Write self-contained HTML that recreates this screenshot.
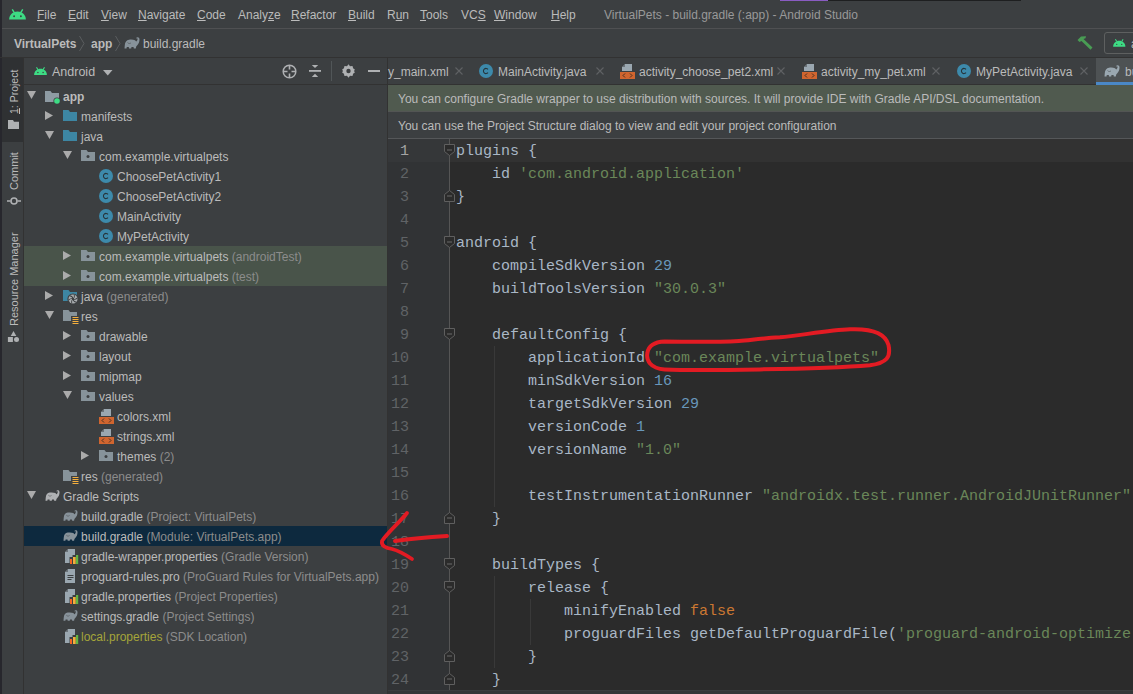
<!DOCTYPE html><html><head><meta charset="utf-8"><style>
*{margin:0;padding:0;box-sizing:border-box}
html,body{width:1133px;height:694px;overflow:hidden;background:#3C3F41}
body{position:relative;font-family:"Liberation Sans",sans-serif;font-size:12px;color:#BBBBBB}
.a{position:absolute}
.t{position:absolute;white-space:pre;line-height:20px;height:20px}
.u{text-decoration:underline;text-underline-offset:1px}
.code{position:absolute;font-family:"Liberation Mono",monospace;font-size:15px;line-height:23px;white-space:pre;color:#A9B7C6}
.ln{position:absolute;font-family:"Liberation Mono",monospace;font-size:15px;line-height:23px;color:#606366;text-align:right;width:40px}
.s{color:#6A8759}.n{color:#6897BB}.k{color:#CC7832}
.g{color:#8C8C8C}
svg{position:absolute;overflow:visible}
</style></head><body>
<div class="a" style="left:0;top:0;width:2px;height:694px;background:#27272d"></div>
<div class="a" style="left:780px;top:0;width:48px;height:1px;background:#8A5CC2"></div>
<div class="a" style="left:828px;top:0;width:193px;height:1px;background:#1E1F20"></div>
<div class="t" style="left:37px;top:5px;color:#BBBBBB"><span class="u">F</span>ile</div>
<div class="t" style="left:68px;top:5px;color:#BBBBBB"><span class="u">E</span>dit</div>
<div class="t" style="left:101px;top:5px;color:#BBBBBB"><span class="u">V</span>iew</div>
<div class="t" style="left:138px;top:5px;color:#BBBBBB"><span class="u">N</span>avigate</div>
<div class="t" style="left:197px;top:5px;color:#BBBBBB"><span class="u">C</span>ode</div>
<div class="t" style="left:238px;top:5px;color:#BBBBBB">Analy<span class="u">z</span>e</div>
<div class="t" style="left:291px;top:5px;color:#BBBBBB"><span class="u">R</span>efactor</div>
<div class="t" style="left:348px;top:5px;color:#BBBBBB"><span class="u">B</span>uild</div>
<div class="t" style="left:387px;top:5px;color:#BBBBBB">R<span class="u">u</span>n</div>
<div class="t" style="left:420px;top:5px;color:#BBBBBB"><span class="u">T</span>ools</div>
<div class="t" style="left:461px;top:5px;color:#BBBBBB">VC<span class="u">S</span></div>
<div class="t" style="left:494px;top:5px;color:#BBBBBB"><span class="u">W</span>indow</div>
<div class="t" style="left:551px;top:5px;color:#BBBBBB"><span class="u">H</span>elp</div>
<div class="t" style="left:604px;top:5px;color:#999999">VirtualPets - build.gradle (:app) - Android Studio</div>
<svg style="left:8.5px;top:8.5px" width="17" height="10.62" viewBox="0 0 24 15"><path d="M0.2 14.8 C0.2 8 5.5 3.4 12 3.4 C18.5 3.4 23.8 8 23.8 14.8 Z" fill="#3DDC84"/><path d="M4.6 0.6 L7.2 4.8 M19.4 0.6 L16.8 4.8" stroke="#3DDC84" stroke-width="2"/><circle cx="7.2" cy="10.2" r="1.3" fill="#3C3F41"/><circle cx="16.8" cy="10.2" r="1.3" fill="#3C3F41"/></svg>
<div class="a" style="left:2px;top:28px;width:1131px;height:1px;background:#4F5052"></div>
<div class="t" style="left:14px;top:34px;font-weight:bold;color:#BBBBBB">VirtualPets</div>
<svg style="left:79px;top:36px" width="6" height="15"><path d="M0.5 0 L5 7.5 L0.5 15" fill="none" stroke="#5A5D5F" stroke-width="1"/></svg>
<div class="t" style="left:91px;top:34px;font-weight:bold;color:#BBBBBB">app</div>
<svg style="left:115px;top:36px" width="6" height="15"><path d="M0.5 0 L5 7.5 L0.5 15" fill="none" stroke="#5A5D5F" stroke-width="1"/></svg>
<svg style="left:124px;top:37px" width="16" height="12.00" viewBox="0 0 16 12"><path d="M0.5 11.5 L0.8 8 C1 5 2.5 3 5 2.7 C7 2.4 9.5 2.5 11 3.2 L12.2 4.5 C13 4 13.5 3 13.6 2 C13.5 1 12.8 1 12.5 1.5 L12 1.2 C12.5 0.2 14 -0.1 15 0.8 C15.8 1.8 15.6 4 14.8 6 C14 7.5 13 8.5 12.2 9.5 L11.8 11.5 L9.8 11.5 L9.5 10 L7.5 10 L7.2 11.5 L5 11.5 L4.8 10 L2.8 10 L2.5 11.5 Z" fill="#87929A"/><path d="M3.5 5.5 C4.5 6.8 6 6.8 7 5.8" stroke="#3C3F41" stroke-width="0.7" fill="none" opacity="0.7"/></svg>
<div class="t" style="left:143px;top:34px;color:#BBBBBB">build.gradle</div>
<svg style="left:1077px;top:36px" width="16" height="14" viewBox="0 0 16 14"><path d="M0.5 4 L4 0.5 L9 0.2 L8.5 2.2 L6.5 3 L15.5 11.5 L13.5 13.8 L4.5 5 L2.5 6 Z" fill="#499C54"/></svg>
<div class="a" style="left:1104px;top:32px;width:40px;height:22px;border:1px solid #5E6060;border-radius:3px"></div>
<svg style="left:1112.5px;top:39px" width="12.5" height="7.81" viewBox="0 0 24 15"><path d="M0.2 14.8 C0.2 8 5.5 3.4 12 3.4 C18.5 3.4 23.8 8 23.8 14.8 Z" fill="#3DDC84"/><path d="M4.6 0.6 L7.2 4.8 M19.4 0.6 L16.8 4.8" stroke="#3DDC84" stroke-width="2"/><circle cx="7.2" cy="10.2" r="1.3" fill="#3C3F41"/><circle cx="16.8" cy="10.2" r="1.3" fill="#3C3F41"/></svg>
<div class="t" style="left:1131px;top:34px">app</div>
<div class="a" style="left:0;top:57px;width:1133px;height:1px;background:#323232"></div>
<div class="a" style="left:2px;top:58px;width:21px;height:636px;background:#3C3F41"></div>
<div class="a" style="left:2px;top:58px;width:21px;height:84px;background:#2F3133"></div>
<div class="a" style="left:23px;top:58px;width:1px;height:636px;background:#323232"></div>
<div class="t" style="left:3.8px;top:113.5px;font-size:10.5px;transform-origin:0 0;transform:rotate(-90deg);color:#BBBBBB"><span class="u">1</span>: Project</div>
<svg style="left:8px;top:120px" width="11" height="9" viewBox="0 0 11 9"><path d="M0 0 L5 0 L6 1.8 L11 1.8 L11 9 L0 9 Z" fill="#AFB1B3"/></svg>
<div class="t" style="left:3.8px;top:190px;font-size:11px;transform-origin:0 0;transform:rotate(-90deg);color:#BBBBBB">Commit</div>
<svg style="left:7px;top:196px" width="14" height="10" viewBox="0 0 14 10"><circle cx="7" cy="5" r="3" fill="none" stroke="#AFB1B3" stroke-width="1.6"/><path d="M0 5 H3.5 M10.5 5 H14" stroke="#AFB1B3" stroke-width="1.6"/></svg>
<div class="t" style="left:3.8px;top:326px;font-size:11px;transform-origin:0 0;transform:rotate(-90deg);color:#BBBBBB">Resource Manager</div>
<svg style="left:7px;top:331px" width="13" height="12" viewBox="0 0 13 12"><path d="M6.5 0 L9.3 5 L3.7 5 Z" fill="#AFB1B3"/><rect x="0.9" y="6" width="5" height="5" fill="#AFB1B3"/><circle cx="9.5" cy="8.5" r="2.5" fill="#AFB1B3"/></svg>
<svg style="left:33.5px;top:66.5px" width="13" height="8.12" viewBox="0 0 24 15"><path d="M0.2 14.8 C0.2 8 5.5 3.4 12 3.4 C18.5 3.4 23.8 8 23.8 14.8 Z" fill="#3DDC84"/><path d="M4.6 0.6 L7.2 4.8 M19.4 0.6 L16.8 4.8" stroke="#3DDC84" stroke-width="2"/><circle cx="7.2" cy="10.2" r="1.3" fill="#3C3F41"/><circle cx="16.8" cy="10.2" r="1.3" fill="#3C3F41"/></svg>
<div class="t" style="left:52px;top:62px;font-size:12.5px;color:#BBBBBB">Android</div>
<svg style="left:103px;top:70px" width="10" height="6"><path d="M0 0 H9.5 L4.75 5.5 Z" fill="#AFB1B3"/></svg>
<svg style="left:281.5px;top:63.5px" width="15" height="15" viewBox="0 0 15 15"><circle cx="7.5" cy="7.5" r="6.3" fill="none" stroke="#AFB1B3" stroke-width="1.5"/><path d="M7.5 1.5 V5.5 M7.5 9.5 V13.5 M1.5 7.5 H5.5 M9.5 7.5 H13.5" stroke="#AFB1B3" stroke-width="1.6"/></svg>
<svg style="left:309px;top:65px" width="12" height="12" viewBox="0 0 12 12"><rect x="0" y="5" width="12" height="1.8" fill="#AFB1B3"/><path d="M2.8 0 H9.2 L6 3 Z M2.8 12 H9.2 L6 8.8 Z" fill="#AFB1B3"/></svg>
<div class="a" style="left:331px;top:61px;width:1px;height:20px;background:#515658"></div>
<svg style="left:341.5px;top:64px" width="13" height="14" viewBox="0 0 13 14"><path d="M6.5 0.3 L8 2.2 L10.5 1.9 L11.1 4.2 L13 5.8 L11.9 7 L13 8.2 L11.1 9.8 L10.5 12.1 L8 11.8 L6.5 13.7 L5 11.8 L2.5 12.1 L1.9 9.8 L0 8.2 L1.1 7 L0 5.8 L1.9 4.2 L2.5 1.9 L5 2.2 Z" fill="#AFB1B3"/><circle cx="6.5" cy="7" r="2.2" fill="#3C3F41"/></svg>
<div class="a" style="left:368px;top:70px;width:12px;height:2px;background:#AFB1B3"></div>
<div class="a" style="left:24px;top:84px;width:363px;height:1px;background:#323232"></div>
<div class="a" style="left:24px;top:246px;width:363px;height:40px;background:#49544A"></div>
<div class="a" style="left:24px;top:526px;width:363px;height:20px;background:#0D293E"></div>
<svg style="left:27px;top:91px" width="9" height="8"><path d="M0 0 H9 L4.5 8 Z" fill="#ABABAB"/></svg>
<svg style="left:45px;top:91px" width="14" height="12" viewBox="0 0 14 12"><path d="M0 0 H5.5 L7 2 H14 V11 H0 Z" fill="#8E9BA3"/></svg>
<svg style="left:53px;top:97px" width="8" height="8"><circle cx="4" cy="4" r="3.6" fill="#3C3F41"/><circle cx="4" cy="4" r="2.8" fill="#3DDC84"/></svg>
<div class="t" style="left:63px;top:87px;font-weight:bold;color:#BBBBBB">app</div>
<svg style="left:45px;top:111px" width="8" height="9"><path d="M0 0 V9 L8 4.5 Z" fill="#ABABAB"/></svg>
<svg style="left:63px;top:110px" width="14" height="12" viewBox="0 0 14 12"><path d="M0 0 H5.5 L7 2 H14 V11 H0 Z" fill="#3D86A3"/></svg>
<div class="t" style="left:81px;top:107px;color:#BBBBBB">manifests</div>
<svg style="left:45px;top:131px" width="9" height="8"><path d="M0 0 H9 L4.5 8 Z" fill="#ABABAB"/></svg>
<svg style="left:63px;top:130px" width="14" height="12" viewBox="0 0 14 12"><path d="M0 0 H5.5 L7 2 H14 V11 H0 Z" fill="#3D86A3"/></svg>
<div class="t" style="left:81px;top:127px;color:#BBBBBB">java</div>
<svg style="left:63px;top:151px" width="9" height="8"><path d="M0 0 H9 L4.5 8 Z" fill="#ABABAB"/></svg>
<svg style="left:81px;top:150px" width="14" height="12" viewBox="0 0 14 12"><path d="M0 0 H5.5 L7 2 H14 V11 H0 Z" fill="#87939A"/><circle cx="7" cy="6.5" r="1.5" fill="#3C3F41"/></svg>
<div class="t" style="left:99px;top:147px;color:#BBBBBB">com.example.virtualpets</div>
<svg style="left:99px;top:169px" width="14" height="14" viewBox="0 0 14 14"><circle cx="7" cy="7" r="7" fill="#3D8AAB"/><path d="M9 5.3 A2.6 2.6 0 1 0 9 8.7" fill="none" stroke="#26343A" stroke-width="1.05"/></svg>
<div class="t" style="left:117px;top:167px;color:#BBBBBB">ChoosePetActivity1</div>
<svg style="left:99px;top:189px" width="14" height="14" viewBox="0 0 14 14"><circle cx="7" cy="7" r="7" fill="#3D8AAB"/><path d="M9 5.3 A2.6 2.6 0 1 0 9 8.7" fill="none" stroke="#26343A" stroke-width="1.05"/></svg>
<div class="t" style="left:117px;top:187px;color:#BBBBBB">ChoosePetActivity2</div>
<svg style="left:99px;top:209px" width="14" height="14" viewBox="0 0 14 14"><circle cx="7" cy="7" r="7" fill="#3D8AAB"/><path d="M9 5.3 A2.6 2.6 0 1 0 9 8.7" fill="none" stroke="#26343A" stroke-width="1.05"/></svg>
<div class="t" style="left:117px;top:207px;color:#BBBBBB">MainActivity</div>
<svg style="left:99px;top:229px" width="14" height="14" viewBox="0 0 14 14"><circle cx="7" cy="7" r="7" fill="#3D8AAB"/><path d="M9 5.3 A2.6 2.6 0 1 0 9 8.7" fill="none" stroke="#26343A" stroke-width="1.05"/></svg>
<div class="t" style="left:117px;top:227px;color:#BBBBBB">MyPetActivity</div>
<svg style="left:63px;top:251px" width="8" height="9"><path d="M0 0 V9 L8 4.5 Z" fill="#ABABAB"/></svg>
<svg style="left:81px;top:250px" width="14" height="12" viewBox="0 0 14 12"><path d="M0 0 H5.5 L7 2 H14 V11 H0 Z" fill="#87939A"/><circle cx="7" cy="6.5" r="1.5" fill="#3C3F41"/></svg>
<div class="t" style="left:99px;top:247px;color:#BBBBBB">com.example.virtualpets<span class="g"> (androidTest)</span></div>
<svg style="left:63px;top:271px" width="8" height="9"><path d="M0 0 V9 L8 4.5 Z" fill="#ABABAB"/></svg>
<svg style="left:81px;top:270px" width="14" height="12" viewBox="0 0 14 12"><path d="M0 0 H5.5 L7 2 H14 V11 H0 Z" fill="#87939A"/><circle cx="7" cy="6.5" r="1.5" fill="#3C3F41"/></svg>
<div class="t" style="left:99px;top:267px;color:#BBBBBB">com.example.virtualpets<span class="g"> (test)</span></div>
<svg style="left:45px;top:291px" width="8" height="9"><path d="M0 0 V9 L8 4.5 Z" fill="#ABABAB"/></svg>
<svg style="left:63px;top:290px" width="14" height="12" viewBox="0 0 14 12"><path d="M0 0 H5.5 L7 2 H14 V11 H0 Z" fill="#3D86A3"/></svg>
<svg style="left:68px;top:293.5px" width="10" height="10" viewBox="0 0 10 10"><circle cx="5" cy="5" r="5.6" fill="#3C3F41"/><circle cx="5" cy="5" r="4.5" fill="#A9ADB0"/><path d="M5 5 C6.2 4.2 6.8 2.5 6.2 0.6" transform="rotate(0 5 5)" stroke="#3C3F41" stroke-width="0.9" fill="none"/><path d="M5 5 C6.2 4.2 6.8 2.5 6.2 0.6" transform="rotate(60 5 5)" stroke="#3C3F41" stroke-width="0.9" fill="none"/><path d="M5 5 C6.2 4.2 6.8 2.5 6.2 0.6" transform="rotate(120 5 5)" stroke="#3C3F41" stroke-width="0.9" fill="none"/><path d="M5 5 C6.2 4.2 6.8 2.5 6.2 0.6" transform="rotate(180 5 5)" stroke="#3C3F41" stroke-width="0.9" fill="none"/><path d="M5 5 C6.2 4.2 6.8 2.5 6.2 0.6" transform="rotate(240 5 5)" stroke="#3C3F41" stroke-width="0.9" fill="none"/><path d="M5 5 C6.2 4.2 6.8 2.5 6.2 0.6" transform="rotate(300 5 5)" stroke="#3C3F41" stroke-width="0.9" fill="none"/><circle cx="5" cy="5" r="1.1" fill="#3C3F41"/></svg>
<div class="t" style="left:81px;top:287px;color:#BBBBBB">java<span class="g"> (generated)</span></div>
<svg style="left:45px;top:311px" width="9" height="8"><path d="M0 0 H9 L4.5 8 Z" fill="#ABABAB"/></svg>
<svg style="left:63px;top:310px" width="14" height="12" viewBox="0 0 14 12"><path d="M0 0 H5.5 L7 2 H14 V11 H0 Z" fill="#87939A"/></svg>
<svg style="left:71px;top:316px" width="8" height="9"><rect x="0" y="0" width="8" height="9" fill="#3C3F41"/><path d="M1.5 1.5 H7.5 M1.5 3.5 H7.5 M1.5 5.5 H7.5 M1.5 7.5 H7.5" stroke="#F4AF3D" stroke-width="1.1"/></svg>
<div class="t" style="left:81px;top:307px;color:#BBBBBB">res</div>
<svg style="left:63px;top:331px" width="8" height="9"><path d="M0 0 V9 L8 4.5 Z" fill="#ABABAB"/></svg>
<svg style="left:81px;top:330px" width="14" height="12" viewBox="0 0 14 12"><path d="M0 0 H5.5 L7 2 H14 V11 H0 Z" fill="#87939A"/><circle cx="7" cy="6.5" r="1.5" fill="#3C3F41"/></svg>
<div class="t" style="left:99px;top:327px;color:#BBBBBB">drawable</div>
<svg style="left:63px;top:351px" width="8" height="9"><path d="M0 0 V9 L8 4.5 Z" fill="#ABABAB"/></svg>
<svg style="left:81px;top:350px" width="14" height="12" viewBox="0 0 14 12"><path d="M0 0 H5.5 L7 2 H14 V11 H0 Z" fill="#87939A"/><circle cx="7" cy="6.5" r="1.5" fill="#3C3F41"/></svg>
<div class="t" style="left:99px;top:347px;color:#BBBBBB">layout</div>
<svg style="left:63px;top:371px" width="8" height="9"><path d="M0 0 V9 L8 4.5 Z" fill="#ABABAB"/></svg>
<svg style="left:81px;top:370px" width="14" height="12" viewBox="0 0 14 12"><path d="M0 0 H5.5 L7 2 H14 V11 H0 Z" fill="#87939A"/><circle cx="7" cy="6.5" r="1.5" fill="#3C3F41"/></svg>
<div class="t" style="left:99px;top:367px;color:#BBBBBB">mipmap</div>
<svg style="left:63px;top:391px" width="9" height="8"><path d="M0 0 H9 L4.5 8 Z" fill="#ABABAB"/></svg>
<svg style="left:81px;top:390px" width="14" height="12" viewBox="0 0 14 12"><path d="M0 0 H5.5 L7 2 H14 V11 H0 Z" fill="#87939A"/><circle cx="7" cy="6.5" r="1.5" fill="#3C3F41"/></svg>
<div class="t" style="left:99px;top:387px;color:#BBBBBB">values</div>
<svg style="left:99px;top:409px" width="16" height="16" viewBox="0 0 16 16"><path d="M5 0 H12 V7 H2 V3 Z" fill="#9AA7B0"/><path d="M2 3 L5 0 L5 3 Z" fill="#3C3F41" opacity="0.5"/><rect x="0" y="8" width="15" height="7" fill="#D0652F"/><path d="M5 9.5 L3 11.5 L5 13.5 M10 9.5 L12 11.5 L10 13.5" fill="none" stroke="#3a2a20" stroke-width="0.9"/></svg>
<div class="t" style="left:117px;top:407px;color:#BBBBBB">colors.xml</div>
<svg style="left:99px;top:429px" width="16" height="16" viewBox="0 0 16 16"><path d="M5 0 H12 V7 H2 V3 Z" fill="#9AA7B0"/><path d="M2 3 L5 0 L5 3 Z" fill="#3C3F41" opacity="0.5"/><rect x="0" y="8" width="15" height="7" fill="#D0652F"/><path d="M5 9.5 L3 11.5 L5 13.5 M10 9.5 L12 11.5 L10 13.5" fill="none" stroke="#3a2a20" stroke-width="0.9"/></svg>
<div class="t" style="left:117px;top:427px;color:#BBBBBB">strings.xml</div>
<svg style="left:81px;top:451px" width="8" height="9"><path d="M0 0 V9 L8 4.5 Z" fill="#ABABAB"/></svg>
<svg style="left:99px;top:450px" width="14" height="12" viewBox="0 0 14 12"><path d="M0 0 H5.5 L7 2 H14 V11 H0 Z" fill="#87939A"/><circle cx="7" cy="6.5" r="1.5" fill="#3C3F41"/></svg>
<div class="t" style="left:117px;top:447px;color:#BBBBBB">themes<span class="g"> (2)</span></div>
<svg style="left:63px;top:470px" width="14" height="12" viewBox="0 0 14 12"><path d="M0 0 H5.5 L7 2 H14 V11 H0 Z" fill="#87939A"/></svg>
<svg style="left:71px;top:476px" width="8" height="9"><rect x="0" y="0" width="8" height="9" fill="#3C3F41"/><path d="M1.5 1.5 H7.5 M1.5 3.5 H7.5 M1.5 5.5 H7.5 M1.5 7.5 H7.5" stroke="#F4AF3D" stroke-width="1.1"/></svg>
<div class="t" style="left:81px;top:467px;color:#BBBBBB">res<span class="g"> (generated)</span></div>
<svg style="left:27px;top:491px" width="9" height="8"><path d="M0 0 H9 L4.5 8 Z" fill="#ABABAB"/></svg>
<svg style="left:45px;top:490px" width="15" height="11.25" viewBox="0 0 16 12"><path d="M0.5 11.5 L0.8 8 C1 5 2.5 3 5 2.7 C7 2.4 9.5 2.5 11 3.2 L12.2 4.5 C13 4 13.5 3 13.6 2 C13.5 1 12.8 1 12.5 1.5 L12 1.2 C12.5 0.2 14 -0.1 15 0.8 C15.8 1.8 15.6 4 14.8 6 C14 7.5 13 8.5 12.2 9.5 L11.8 11.5 L9.8 11.5 L9.5 10 L7.5 10 L7.2 11.5 L5 11.5 L4.8 10 L2.8 10 L2.5 11.5 Z" fill="#AFB1B3"/><path d="M3.5 5.5 C4.5 6.8 6 6.8 7 5.8" stroke="#3C3F41" stroke-width="0.7" fill="none" opacity="0.7"/></svg>
<div class="t" style="left:63px;top:487px;color:#BBBBBB">Gradle Scripts</div>
<svg style="left:63px;top:510px" width="15" height="11.25" viewBox="0 0 16 12"><path d="M0.5 11.5 L0.8 8 C1 5 2.5 3 5 2.7 C7 2.4 9.5 2.5 11 3.2 L12.2 4.5 C13 4 13.5 3 13.6 2 C13.5 1 12.8 1 12.5 1.5 L12 1.2 C12.5 0.2 14 -0.1 15 0.8 C15.8 1.8 15.6 4 14.8 6 C14 7.5 13 8.5 12.2 9.5 L11.8 11.5 L9.8 11.5 L9.5 10 L7.5 10 L7.2 11.5 L5 11.5 L4.8 10 L2.8 10 L2.5 11.5 Z" fill="#87929A"/><path d="M3.5 5.5 C4.5 6.8 6 6.8 7 5.8" stroke="#3C3F41" stroke-width="0.7" fill="none" opacity="0.7"/></svg>
<div class="t" style="left:81px;top:507px;color:#BBBBBB">build.gradle<span class="g"> (Project: VirtualPets)</span></div>
<svg style="left:63px;top:530px" width="15" height="11.25" viewBox="0 0 16 12"><path d="M0.5 11.5 L0.8 8 C1 5 2.5 3 5 2.7 C7 2.4 9.5 2.5 11 3.2 L12.2 4.5 C13 4 13.5 3 13.6 2 C13.5 1 12.8 1 12.5 1.5 L12 1.2 C12.5 0.2 14 -0.1 15 0.8 C15.8 1.8 15.6 4 14.8 6 C14 7.5 13 8.5 12.2 9.5 L11.8 11.5 L9.8 11.5 L9.5 10 L7.5 10 L7.2 11.5 L5 11.5 L4.8 10 L2.8 10 L2.5 11.5 Z" fill="#87929A"/><path d="M3.5 5.5 C4.5 6.8 6 6.8 7 5.8" stroke="#3C3F41" stroke-width="0.7" fill="none" opacity="0.7"/></svg>
<div class="t" style="left:81px;top:527px;color:#BBBBBB">build.gradle<span class="g"> (Module: VirtualPets.app)</span></div>
<svg style="left:65px;top:549px" width="14" height="16" viewBox="0 0 14 16"><path d="M3 0 H10 V6 H7.5 V8 H4.5 V14 H0 V3 Z" fill="#9AA7B0"/><path d="M0 3 L3 0 V3 Z" fill="#3C3F41" opacity="0.5"/><rect x="5" y="10" width="2" height="5" fill="#F26522"/><rect x="8" y="8" width="2.7" height="7" fill="#F4AF3D"/><rect x="11" y="6" width="2.2" height="9" fill="#62B543"/></svg>
<div class="t" style="left:81px;top:547px;color:#BBBBBB">gradle-wrapper.properties<span class="g"> (Gradle Version)</span></div>
<svg style="left:65px;top:569px" width="12" height="15" viewBox="0 0 12 15"><path d="M3 0 H10 V14 H0 V3 Z" fill="#9AA7B0"/><path d="M0 3 L3 0 V3 Z" fill="#3C3F41" opacity="0.5"/><path d="M2.5 6.5 H8.5 M2.5 8.5 H8.5 M2.5 10.5 H6.5" stroke="#3C3F41" stroke-width="1"/></svg>
<div class="t" style="left:81px;top:567px;color:#BBBBBB">proguard-rules.pro<span class="g"> (ProGuard Rules for VirtualPets.app)</span></div>
<svg style="left:65px;top:589px" width="14" height="16" viewBox="0 0 14 16"><path d="M3 0 H10 V6 H7.5 V8 H4.5 V14 H0 V3 Z" fill="#9AA7B0"/><path d="M0 3 L3 0 V3 Z" fill="#3C3F41" opacity="0.5"/><rect x="5" y="10" width="2" height="5" fill="#F26522"/><rect x="8" y="8" width="2.7" height="7" fill="#F4AF3D"/><rect x="11" y="6" width="2.2" height="9" fill="#62B543"/></svg>
<div class="t" style="left:81px;top:587px;color:#BBBBBB">gradle.properties<span class="g"> (Project Properties)</span></div>
<svg style="left:63px;top:610px" width="15" height="11.25" viewBox="0 0 16 12"><path d="M0.5 11.5 L0.8 8 C1 5 2.5 3 5 2.7 C7 2.4 9.5 2.5 11 3.2 L12.2 4.5 C13 4 13.5 3 13.6 2 C13.5 1 12.8 1 12.5 1.5 L12 1.2 C12.5 0.2 14 -0.1 15 0.8 C15.8 1.8 15.6 4 14.8 6 C14 7.5 13 8.5 12.2 9.5 L11.8 11.5 L9.8 11.5 L9.5 10 L7.5 10 L7.2 11.5 L5 11.5 L4.8 10 L2.8 10 L2.5 11.5 Z" fill="#87929A"/><path d="M3.5 5.5 C4.5 6.8 6 6.8 7 5.8" stroke="#3C3F41" stroke-width="0.7" fill="none" opacity="0.7"/></svg>
<div class="t" style="left:81px;top:607px;color:#BBBBBB">settings.gradle<span class="g"> (Project Settings)</span></div>
<svg style="left:65px;top:629px" width="14" height="16" viewBox="0 0 14 16"><path d="M3 0 H10 V6 H7.5 V8 H4.5 V14 H0 V3 Z" fill="#9AA7B0"/><path d="M0 3 L3 0 V3 Z" fill="#3C3F41" opacity="0.5"/><rect x="5" y="10" width="2" height="5" fill="#F26522"/><rect x="8" y="8" width="2.7" height="7" fill="#F4AF3D"/><rect x="11" y="6" width="2.2" height="9" fill="#62B543"/></svg>
<div class="t" style="left:81px;top:627px;color:#A5A53A">local.properties<span class="g"> (SDK Location)</span></div>
<div class="a" style="left:387px;top:58px;width:1px;height:636px;background:#323232"></div>
<div class="a" style="left:1096px;top:58px;width:37px;height:27px;background:#4E5254"></div>
<div class="a" style="left:1096px;top:82px;width:37px;height:3px;background:#4A88C7"></div>
<div class="t" style="left:388px;top:62px">y_main.xml</div>
<svg style="left:455px;top:67px" width="8" height="8"><path d="M0.5 0.5 L7.5 7.5 M7.5 0.5 L0.5 7.5" stroke="#606264" stroke-width="1.1"/></svg>
<svg style="left:479px;top:64px" width="14" height="14" viewBox="0 0 14 14"><circle cx="7" cy="7" r="7" fill="#3D8AAB"/><path d="M9 5.3 A2.6 2.6 0 1 0 9 8.7" fill="none" stroke="#26343A" stroke-width="1.05"/></svg>
<div class="t" style="left:498px;top:62px">MainActivity.java</div>
<svg style="left:596px;top:67px" width="8" height="8"><path d="M0.5 0.5 L7.5 7.5 M7.5 0.5 L0.5 7.5" stroke="#606264" stroke-width="1.1"/></svg>
<svg style="left:620px;top:64px" width="16" height="16" viewBox="0 0 16 16"><path d="M5 0 H12 V7 H2 V3 Z" fill="#9AA7B0"/><path d="M2 3 L5 0 L5 3 Z" fill="#3C3F41" opacity="0.5"/><rect x="0" y="8" width="15" height="7" fill="#D0652F"/><path d="M5 9.5 L3 11.5 L5 13.5 M10 9.5 L12 11.5 L10 13.5" fill="none" stroke="#3a2a20" stroke-width="0.9"/></svg>
<div class="t" style="left:639px;top:62px">activity_choose_pet2.xml</div>
<svg style="left:777px;top:67px" width="8" height="8"><path d="M0.5 0.5 L7.5 7.5 M7.5 0.5 L0.5 7.5" stroke="#606264" stroke-width="1.1"/></svg>
<svg style="left:802px;top:64px" width="16" height="16" viewBox="0 0 16 16"><path d="M5 0 H12 V7 H2 V3 Z" fill="#9AA7B0"/><path d="M2 3 L5 0 L5 3 Z" fill="#3C3F41" opacity="0.5"/><rect x="0" y="8" width="15" height="7" fill="#D0652F"/><path d="M5 9.5 L3 11.5 L5 13.5 M10 9.5 L12 11.5 L10 13.5" fill="none" stroke="#3a2a20" stroke-width="0.9"/></svg>
<div class="t" style="left:821px;top:62px">activity_my_pet.xml</div>
<svg style="left:932px;top:67px" width="8" height="8"><path d="M0.5 0.5 L7.5 7.5 M7.5 0.5 L0.5 7.5" stroke="#606264" stroke-width="1.1"/></svg>
<svg style="left:957px;top:64px" width="14" height="14" viewBox="0 0 14 14"><circle cx="7" cy="7" r="7" fill="#3D8AAB"/><path d="M9 5.3 A2.6 2.6 0 1 0 9 8.7" fill="none" stroke="#26343A" stroke-width="1.05"/></svg>
<div class="t" style="left:976px;top:62px">MyPetActivity.java</div>
<svg style="left:1080px;top:67px" width="8" height="8"><path d="M0.5 0.5 L7.5 7.5 M7.5 0.5 L0.5 7.5" stroke="#606264" stroke-width="1.1"/></svg>
<svg style="left:1104px;top:65px" width="16" height="12.00" viewBox="0 0 16 12"><path d="M0.5 11.5 L0.8 8 C1 5 2.5 3 5 2.7 C7 2.4 9.5 2.5 11 3.2 L12.2 4.5 C13 4 13.5 3 13.6 2 C13.5 1 12.8 1 12.5 1.5 L12 1.2 C12.5 0.2 14 -0.1 15 0.8 C15.8 1.8 15.6 4 14.8 6 C14 7.5 13 8.5 12.2 9.5 L11.8 11.5 L9.8 11.5 L9.5 10 L7.5 10 L7.2 11.5 L5 11.5 L4.8 10 L2.8 10 L2.5 11.5 Z" fill="#9AA7B0"/><path d="M3.5 5.5 C4.5 6.8 6 6.8 7 5.8" stroke="#3C3F41" stroke-width="0.7" fill="none" opacity="0.7"/></svg>
<div class="t" style="left:1125px;top:62px">build.gradle</div>
<div class="a" style="left:388px;top:84px;width:708px;height:1px;background:#323232"></div>
<div class="a" style="left:388px;top:85px;width:745px;height:26px;background:#505A4F"></div>
<div class="a" style="left:388px;top:111px;width:745px;height:1px;background:#535554"></div>
<div class="t" style="left:398px;top:89px">You can configure Gradle wrapper to use distribution with sources. It will provide IDE with Gradle API/DSL documentation.</div>
<div class="t" style="left:398px;top:116px">You can use the Project Structure dialog to view and edit your project configuration</div>
<div class="a" style="left:388px;top:138px;width:745px;height:1px;background:#555759"></div>
<div class="a" style="left:388px;top:139px;width:61px;height:551px;background:#313335"></div>
<div class="a" style="left:449px;top:139px;width:684px;height:551px;background:#2B2B2B"></div>
<div class="a" style="left:388px;top:690px;width:745px;height:1px;background:#3A3C3E"></div>
<div class="a" style="left:388px;top:691px;width:745px;height:3px;background:#333537"></div>
<div class="a" style="left:388px;top:139px;width:61px;height:23px;background:#353739"></div>
<div class="a" style="left:449px;top:139px;width:684px;height:23px;background:#323232"></div>
<div class="a" style="left:449px;top:139px;width:1px;height:551px;background:#555555"></div>
<div class="a" style="left:494px;top:346px;width:1px;height:161px;background:#393939"></div>
<div class="a" style="left:494px;top:576px;width:1px;height:92px;background:#393939"></div>
<div class="a" style="left:530px;top:599px;width:1px;height:46px;background:#393939"></div>
<div class="ln" style="left:369px;top:140px;color:#A4A3A3">1</div>
<div class="code" style="left:456px;top:140px">plugins {</div>
<div class="ln" style="left:369px;top:163px">2</div>
<div class="code" style="left:456px;top:163px">    id <span class="s">&#x27;com.android.application&#x27;</span></div>
<div class="ln" style="left:369px;top:186px">3</div>
<div class="code" style="left:456px;top:186px">}</div>
<div class="ln" style="left:369px;top:209px">4</div>
<div class="code" style="left:456px;top:209px"></div>
<div class="ln" style="left:369px;top:232px">5</div>
<div class="code" style="left:456px;top:232px">android {</div>
<div class="ln" style="left:369px;top:255px">6</div>
<div class="code" style="left:456px;top:255px">    compileSdkVersion <span class="n">29</span></div>
<div class="ln" style="left:369px;top:278px">7</div>
<div class="code" style="left:456px;top:278px">    buildToolsVersion <span class="s">&quot;30.0.3&quot;</span></div>
<div class="ln" style="left:369px;top:301px">8</div>
<div class="code" style="left:456px;top:301px"></div>
<div class="ln" style="left:369px;top:324px">9</div>
<div class="code" style="left:456px;top:324px">    defaultConfig {</div>
<div class="ln" style="left:369px;top:347px">10</div>
<div class="code" style="left:456px;top:347px">        applicationId <span class="s">&quot;com.example.virtualpets&quot;</span></div>
<div class="ln" style="left:369px;top:370px">11</div>
<div class="code" style="left:456px;top:370px">        minSdkVersion <span class="n">16</span></div>
<div class="ln" style="left:369px;top:393px">12</div>
<div class="code" style="left:456px;top:393px">        targetSdkVersion <span class="n">29</span></div>
<div class="ln" style="left:369px;top:416px">13</div>
<div class="code" style="left:456px;top:416px">        versionCode <span class="n">1</span></div>
<div class="ln" style="left:369px;top:439px">14</div>
<div class="code" style="left:456px;top:439px">        versionName <span class="s">&quot;1.0&quot;</span></div>
<div class="ln" style="left:369px;top:462px">15</div>
<div class="code" style="left:456px;top:462px"></div>
<div class="ln" style="left:369px;top:485px">16</div>
<div class="code" style="left:456px;top:485px">        testInstrumentationRunner <span class="s">&quot;androidx.test.runner.AndroidJUnitRunner&quot;</span></div>
<div class="ln" style="left:369px;top:508px">17</div>
<div class="code" style="left:456px;top:508px">    }</div>
<div class="ln" style="left:369px;top:531px">18</div>
<div class="code" style="left:456px;top:531px"></div>
<div class="ln" style="left:369px;top:554px">19</div>
<div class="code" style="left:456px;top:554px">    buildTypes {</div>
<div class="ln" style="left:369px;top:577px">20</div>
<div class="code" style="left:456px;top:577px">        release {</div>
<div class="ln" style="left:369px;top:600px">21</div>
<div class="code" style="left:456px;top:600px">            minifyEnabled <span class="k">false</span></div>
<div class="ln" style="left:369px;top:623px">22</div>
<div class="code" style="left:456px;top:623px">            proguardFiles getDefaultProguardFile(<span class="s">&#x27;proguard-android-optimize.txt&#x27;</span>), <span class="s">&#x27;proguard-rules.pro&#x27;</span></div>
<div class="ln" style="left:369px;top:646px">23</div>
<div class="code" style="left:456px;top:646px">        }</div>
<div class="ln" style="left:369px;top:669px">24</div>
<div class="code" style="left:456px;top:669px">    }</div>
<svg style="left:444px;top:144px" width="11" height="12" viewBox="0 0 11 12"><path d="M0.5 0.5 H10.5 V7.5 L5.5 11.5 L0.5 7.5 Z" fill="#2B2B2B" stroke="#5F5F5F" stroke-width="1"/><path d="M3 6 H8" stroke="#6B6B6B" stroke-width="1"/></svg>
<svg style="left:444px;top:236px" width="11" height="12" viewBox="0 0 11 12"><path d="M0.5 0.5 H10.5 V7.5 L5.5 11.5 L0.5 7.5 Z" fill="#2B2B2B" stroke="#5F5F5F" stroke-width="1"/><path d="M3 6 H8" stroke="#6B6B6B" stroke-width="1"/></svg>
<svg style="left:444px;top:328px" width="11" height="12" viewBox="0 0 11 12"><path d="M0.5 0.5 H10.5 V7.5 L5.5 11.5 L0.5 7.5 Z" fill="#2B2B2B" stroke="#5F5F5F" stroke-width="1"/><path d="M3 6 H8" stroke="#6B6B6B" stroke-width="1"/></svg>
<svg style="left:444px;top:558px" width="11" height="12" viewBox="0 0 11 12"><path d="M0.5 0.5 H10.5 V7.5 L5.5 11.5 L0.5 7.5 Z" fill="#2B2B2B" stroke="#5F5F5F" stroke-width="1"/><path d="M3 6 H8" stroke="#6B6B6B" stroke-width="1"/></svg>
<svg style="left:444px;top:581px" width="11" height="12" viewBox="0 0 11 12"><path d="M0.5 0.5 H10.5 V7.5 L5.5 11.5 L0.5 7.5 Z" fill="#2B2B2B" stroke="#5F5F5F" stroke-width="1"/><path d="M3 6 H8" stroke="#6B6B6B" stroke-width="1"/></svg>
<svg style="left:444px;top:190px" width="11" height="12" viewBox="0 0 11 12"><path d="M0.5 11.5 H10.5 V4.5 L5.5 0.5 L0.5 4.5 Z" fill="#2B2B2B" stroke="#5F5F5F" stroke-width="1"/><path d="M3 6 H8" stroke="#6B6B6B" stroke-width="1"/></svg>
<svg style="left:444px;top:512px" width="11" height="12" viewBox="0 0 11 12"><path d="M0.5 11.5 H10.5 V4.5 L5.5 0.5 L0.5 4.5 Z" fill="#2B2B2B" stroke="#5F5F5F" stroke-width="1"/><path d="M3 6 H8" stroke="#6B6B6B" stroke-width="1"/></svg>
<svg style="left:444px;top:650px" width="11" height="12" viewBox="0 0 11 12"><path d="M0.5 11.5 H10.5 V4.5 L5.5 0.5 L0.5 4.5 Z" fill="#2B2B2B" stroke="#5F5F5F" stroke-width="1"/><path d="M3 6 H8" stroke="#6B6B6B" stroke-width="1"/></svg>
<svg style="left:444px;top:673px" width="11" height="12" viewBox="0 0 11 12"><path d="M0.5 11.5 H10.5 V4.5 L5.5 0.5 L0.5 4.5 Z" fill="#2B2B2B" stroke="#5F5F5F" stroke-width="1"/><path d="M3 6 H8" stroke="#6B6B6B" stroke-width="1"/></svg>
<svg style="left:0;top:0" width="1133" height="694" viewBox="0 0 1133 694"><path d="M664.7 341.6 C690 342 720 342 739 341 C750 340.5 757 338.5 780 337.3 C800 335.5 830 330 850 329.3 C870 328.5 885 332 888.5 345 C891 357 887 363 870 365.3 C850 367 800 368.8 760 369.4 C720 370 680 370 664.7 369.4 C650 368.5 646 360 647.4 353 C648.5 346 655 342 664.7 341.6 Z" fill="none" stroke="#E31B23" stroke-width="4" stroke-linecap="round"/><path d="M447 536 C430 537 415 538 395 541" fill="none" stroke="#E31B23" stroke-width="4" stroke-linecap="round"/><path d="M407 513 C398 524 388 532 382 541 C381 546 386 548 392 549 C400 551 406 555 412 559" fill="none" stroke="#E31B23" stroke-width="3.8" stroke-linecap="round" stroke-linejoin="round"/></svg>
</body></html>
